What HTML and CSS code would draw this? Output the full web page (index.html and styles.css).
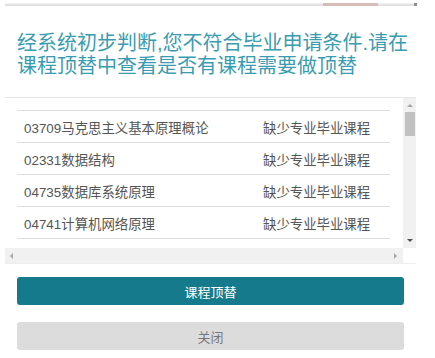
FILE: index.html
```html
<!DOCTYPE html>
<html lang="zh-CN">
<head>
  <meta charset="UTF-8">
  <title>毕业申请</title>
  <meta name="viewport" content="width=device-width, initial-scale=1">
  <link rel="stylesheet" href="styles.css">
</head>
<body>
  <!-- page behind the dialog, only its bottom edge shows -->
  <div class="backdrop">
    <div class="backdrop-line"><span class="backdrop-pic"></span></div>
  </div>

  <div class="dialog">
    <h2 class="dialog-title">经系统初步判断,您不符合毕业申请条件.请在<br>课程顶替中查看是否有课程需要做顶替</h2>

    <div class="scroll-box">
      <div class="scroll-view">
        <table class="course-table">
          <tbody>
            <tr><td class="course-name">03709马克思主义基本原理概论</td><td class="course-reason">缺少专业毕业课程</td></tr>
            <tr><td class="course-name">02331数据结构</td><td class="course-reason">缺少专业毕业课程</td></tr>
            <tr><td class="course-name">04735数据库系统原理</td><td class="course-reason">缺少专业毕业课程</td></tr>
            <tr><td class="course-name">04741计算机网络原理</td><td class="course-reason">缺少专业毕业课程</td></tr>
            <tr><td class="course-name"></td><td class="course-reason"></td></tr>
          </tbody>
        </table>
      </div>
      <div class="vbar">
        <span class="arrow arrow-up"></span>
        <span class="vbar-thumb"></span>
        <span class="arrow arrow-down"></span>
      </div>
      <div class="hbar">
        <span class="arrow arrow-left"></span>
        <span class="arrow arrow-right"></span>
      </div>
      <div class="corner"></div>
    </div>

    <div class="actions">
      <button class="btn btn-primary">课程顶替</button>
      <button class="btn btn-close">关闭</button>
    </div>
  </div>
</body>
</html>
```

FILE: styles.css
```css
body {
  margin: 0;
  background: #fff;
  font-family: "Liberation Sans", "Noto Sans CJK SC", Arial, sans-serif;
}
.backdrop {
  height: 6px;
  padding: 3px 0 0 5px;
  box-sizing: border-box;
}
.backdrop-line {
  display: flex;
  width: 409px;
  height: 3px;
  background: linear-gradient(#f3f3f3, #d9d9d9);
  border-right: 3px solid #8d8d8d;
}
.backdrop-pic {
  width: 55px;
  height: 3px;
  margin-left: 318px;
  background: #d8bcb8;
}
.dialog {
  width: 411px;
  margin-left: 5px;
  background: #fff;
}
.dialog-title {
  margin: 0;
  padding: 26px 12px 19px;
  font-size: 20px;
  line-height: 23px;
  font-weight: normal;
  color: #3a9cb1;
  white-space: nowrap;
}
/* table with its (static) scrollbars */
.scroll-box {
  display: grid;
  grid-template-columns: 1fr 13px;
  grid-template-rows: 150px 15px;
  border-top: 1px solid #e6e6e6;
  border-bottom: 1px solid #eee;
}
.scroll-view {
  overflow: hidden;
}
.course-table {
  margin: 12px 0 0 12px;
  width: 373px;
  border-collapse: collapse;
  table-layout: fixed;
  font-size: 13.4px;
  color: #555;
}
.course-table td {
  height: 31px;
  padding: 0;
  border-top: 1px solid #dedede;
  white-space: nowrap;
}
.course-name {
  width: 239px;
  padding-left: 7px !important;
}
.vbar {
  display: flex;
  flex-direction: column;
  align-items: center;
  background: #f1f1f1;
  padding-top: 6px;
}
.vbar-thumb {
  width: 10px;
  height: 24px;
  margin-top: 5px;
  background: #c1c1c1;
}
.hbar {
  display: flex;
  align-items: center;
  justify-content: space-between;
  padding: 0 6px 0 5px;
  background: #f1f1f1;
}
.corner {
  background: #fff;
}
.arrow {
  width: 0;
  height: 0;
  border: 3px solid transparent;
}
.arrow-up {
  border-top: 0;
  border-bottom: 3px solid #a8a8a8;
}
.arrow-down {
  margin-top: auto;
  margin-bottom: 6px;
  border-bottom: 0;
  border-top: 3px solid #505050;
}
.arrow-left {
  border-left: 0;
  border-right: 3px solid #a8a8a8;
}
.arrow-right {
  border-right: 0;
  border-left: 3px solid #a8a8a8;
}
.actions {
  display: flex;
  flex-direction: column;
  gap: 17px;
  padding: 13px 12px 9px;
}
.btn {
  height: 28px;
  border: none;
  border-radius: 3px;
  font-family: "Liberation Sans", "Noto Sans CJK SC", Arial, sans-serif;
  font-size: 13px;
  cursor: pointer;
}
.btn-primary {
  background: #147a8c;
  color: #fff;
}
.btn-close {
  background: #dcdcdc;
  color: #777;
}
```
